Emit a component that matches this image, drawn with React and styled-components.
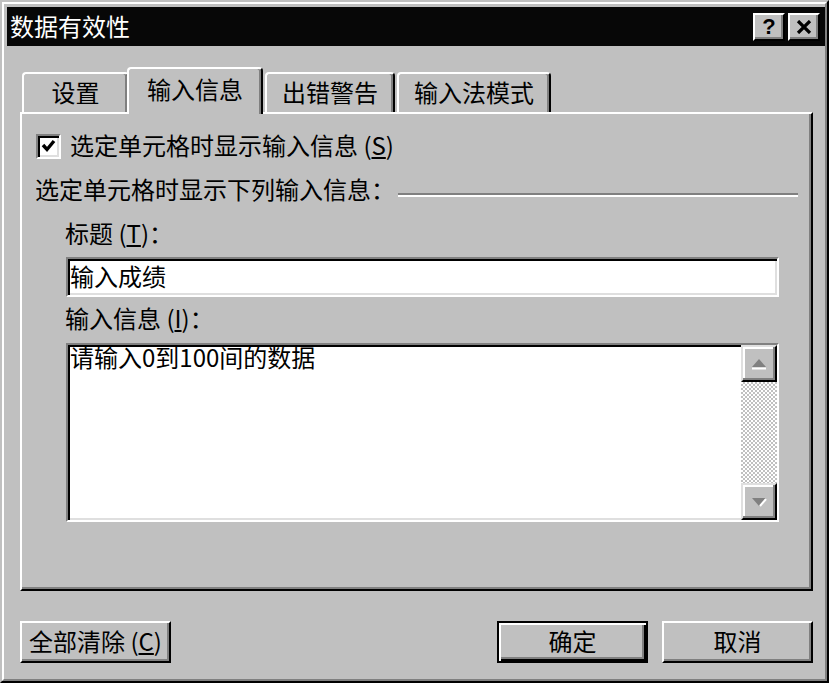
import React from "react";
import styled, { createGlobalStyle, css } from "styled-components";

const GlobalStyle = createGlobalStyle`
  html, body {
    margin: 0;
    padding: 0;
    background: #c0c0c0;
  }
  body {
    font-family: "Noto Sans CJK SC", "Liberation Sans", sans-serif;
    color: #000;
  }
`;

// win95 style bevels, doubled for the scaled screenshot
const raised = css`
  border: 2px solid;
  border-color: #fff #000 #000 #fff;
  box-shadow: inset -2px -2px #808080;
`;

const sunken = css`
  border: 2px solid;
  border-color: #808080 #fff #fff #808080;
  box-shadow: inset 2px 2px #000, inset -2px -2px #dfdfdf;
  background: #fff;
`;

const Window = styled.div`
  width: 829px;
  height: 683px;
  box-sizing: border-box;
  background: #c0c0c0;
  border: 2px solid;
  border-color: #c0c0c0 #000 #000 #c0c0c0;
`;

const WindowInner = styled.div`
  height: 100%;
  box-sizing: border-box;
  border: 2px solid;
  border-color: #fff #808080 #808080 #fff;
  padding: 3px 0 0 3px;
  display: flex;
  flex-direction: column;
`;

const TitleBar = styled.div`
  height: 39px;
  background: #070707;
  display: flex;
  align-items: center;
  padding-left: 3px;
`;

const Title = styled.div`
  color: #fff;
  font-size: 24px;
  line-height: 1;
  flex: 1;
  margin-top: -2px;
`;

const TitleButton = styled.div`
  ${raised};
  box-sizing: border-box;
  width: 32px;
  height: 28px;
  background: #c0c0c0;
  margin-left: 3px;
  display: flex;
  align-items: center;
  justify-content: center;
  font-family: "Liberation Sans", sans-serif;
  font-weight: bold;
  font-size: 22px;
  line-height: 1;
  &:last-child {
    margin-right: 5px;
  }
`;

const Body = styled.div`
  flex: 1;
  display: flex;
  flex-direction: column;
  padding: 21px 12px 0 13px;
`;

const TabRow = styled.div`
  display: flex;
  align-items: flex-end;
  gap: 2px;
  padding-left: 2px;
  height: 45px;
`;

const Tab = styled.div`
  box-sizing: border-box;
  position: relative;
  z-index: ${({ $active }) => ($active ? 2 : 1)};
  height: ${({ $active }) => ($active ? 47 : 40)}px;
  margin: ${({ $active }) => ($active ? "0 0 -2px -4px" : "0")};
  min-width: ${({ $min }) => $min || 0}px;
  padding: 0 ${({ $active }) => ($active ? 18 : 15)}px
    ${({ $active }) => ($active ? 5 : 2)}px;
  border: 2px solid;
  border-bottom: none;
  border-color: #fff #000 transparent #fff;
  border-radius: 4px 4px 0 0;
  box-shadow: inset -2px 0 #808080;
  background: #c0c0c0;
  display: flex;
  align-items: center;
  justify-content: center;
  font-size: 24px;
  line-height: 1;
  white-space: nowrap;
`;

const Panel = styled.div`
  position: relative;
  box-sizing: border-box;
  height: 479px;
  border: 2px solid;
  border-color: #fff #000 #000 #fff;
  box-shadow: inset -2px -2px #808080;
  display: flex;
  flex-direction: column;
`;

const CheckRow = styled.div`
  display: flex;
  align-items: center;
  height: 26px;
  margin-top: 19px;
  padding-left: 14px;
`;

const CheckBox = styled.div`
  ${sunken};
  box-sizing: border-box;
  width: 25px;
  height: 25px;
  display: flex;
  align-items: center;
  justify-content: center;
`;

const Text = styled.span`
  font-size: 24px;
  line-height: 1;
  white-space: nowrap;
  margin-left: ${({ $ml }) => $ml || 0}px;
  margin-top: -2px;
`;

const GroupRow = styled.div`
  display: flex;
  align-items: center;
  height: 26px;
  margin-top: 18px;
  padding-left: 13px;
`;

const GroupLine = styled.div`
  flex: 1;
  height: 0;
  border-top: 2px solid #808080;
  border-bottom: 2px solid #fff;
  margin: 10px 13px 0 3px;
`;

const FieldLabel = styled.div`
  height: 26px;
  display: flex;
  align-items: center;
  margin: ${({ $mt }) => $mt}px 0 0 43px;
  padding-bottom: 3px;
  box-sizing: border-box;
  font-size: 24px;
  line-height: 1;
`;

const TextField = styled.div`
  ${sunken};
  box-sizing: border-box;
  height: 40px;
  margin: 10px 32px 0 44px;
  padding: 0 0 3px 2px;
  display: flex;
  align-items: center;
  font-size: 24px;
  line-height: 1;
`;

const TextArea = styled.div`
  ${sunken};
  box-sizing: border-box;
  height: 179px;
  margin: 11px 32px 0 44px;
  display: flex;
`;

const AreaText = styled.div`
  flex: 1;
  padding: 0 2px;
  font-size: 24px;
  line-height: 1;
`;

const ScrollBar = styled.div`
  width: 36px;
  display: flex;
  flex-direction: column;
`;

const ScrollButton = styled.div`
  box-sizing: border-box;
  height: 37px;
  border: 2px solid;
  border-color: #dfdfdf #000 #000 #dfdfdf;
  box-shadow: inset -2px -2px #808080, inset 2px 2px #fff;
  background: #c0c0c0;
  display: flex;
  align-items: center;
  justify-content: center;
`;

const ScrollTrack = styled.div`
  flex: 1;
  background: repeating-conic-gradient(#c0c0c0 0 25%, #fff 0 50%) 0 0 / 4px 4px;
`;

const ButtonBar = styled.div`
  display: flex;
  margin-top: 30px;
`;

const Button = styled.div`
  box-sizing: border-box;
  width: 151px;
  height: 42px;
  margin-left: ${({ $ml }) => $ml || "0"};
  padding-bottom: 3px;
  background: #c0c0c0;
  display: flex;
  align-items: center;
  justify-content: center;
  font-size: 24px;
  line-height: 1;
  white-space: nowrap;
  ${({ $default }) =>
    $default
      ? css`
          border: 2px solid #000;
          box-shadow: inset 2px 2px #fff, inset -2px -2px #000,
            inset -4px -4px #808080;
        `
      : raised};
`;

const Key = styled.span`
  text-decoration: underline;
  text-underline-offset: 2px;
`;

const App = () => {
  return (
    <>
      <GlobalStyle />
      <Window>
        <WindowInner>
          <TitleBar>
            <Title>数据有效性</Title>
            <TitleButton>?</TitleButton>
            <TitleButton>
              <svg width="16" height="14" viewBox="0 0 16 14">
                <path d="M2 1 L14 13 M14 1 L2 13" stroke="#000" strokeWidth="3.2" fill="none" />
              </svg>
            </TitleButton>
          </TitleBar>

          <Body>
            <TabRow>
              <Tab $min={107}>设置</Tab>
              <Tab $active>输入信息</Tab>
              <Tab>出错警告</Tab>
              <Tab>输入法模式</Tab>
            </TabRow>

            <Panel>
              <CheckRow>
                <CheckBox>
                  <svg width="15" height="14" viewBox="0 0 15 14">
                    <path d="M2 6 L6 10.5 L13 2" stroke="#000" strokeWidth="3.4" fill="none" />
                  </svg>
                </CheckBox>
                <Text $ml={9}>
                  选定单元格时显示输入信息 (<Key>S</Key>)
                </Text>
              </CheckRow>

              <GroupRow>
                <Text>选定单元格时显示下列输入信息：</Text>
                <GroupLine />
              </GroupRow>

              <FieldLabel $mt={18}>
                标题 (<Key>T</Key>)：
              </FieldLabel>
              <TextField>输入成绩</TextField>

              <FieldLabel $mt={9}>
                输入信息 (<Key>I</Key>)：
              </FieldLabel>
              <TextArea>
                <AreaText>请输入0到100间的数据</AreaText>
                <ScrollBar>
                  <ScrollButton>
                    <svg width="16" height="12" viewBox="0 0 16 12">
                      <path d="M8 1 L15 9 L1 9 Z" fill="#808080" />
                      <path d="M1 10.5 H15" stroke="#fff" strokeWidth="2" />
                    </svg>
                  </ScrollButton>
                  <ScrollTrack />
                  <ScrollButton>
                    <svg width="16" height="12" viewBox="0 0 16 12">
                      <path d="M1 2 L15 2 L8 10 Z" fill="#808080" />
                      <path d="M15 3 L9 10" stroke="#fff" strokeWidth="2" />
                    </svg>
                  </ScrollButton>
                </ScrollBar>
              </TextArea>
            </Panel>

            <ButtonBar>
              <Button>
                全部清除 (<Key>C</Key>)
              </Button>
              <Button $default $ml="auto">
                确定
              </Button>
              <Button $ml="14px">取消</Button>
            </ButtonBar>
          </Body>
        </WindowInner>
      </Window>
    </>
  );
};

export default App;
